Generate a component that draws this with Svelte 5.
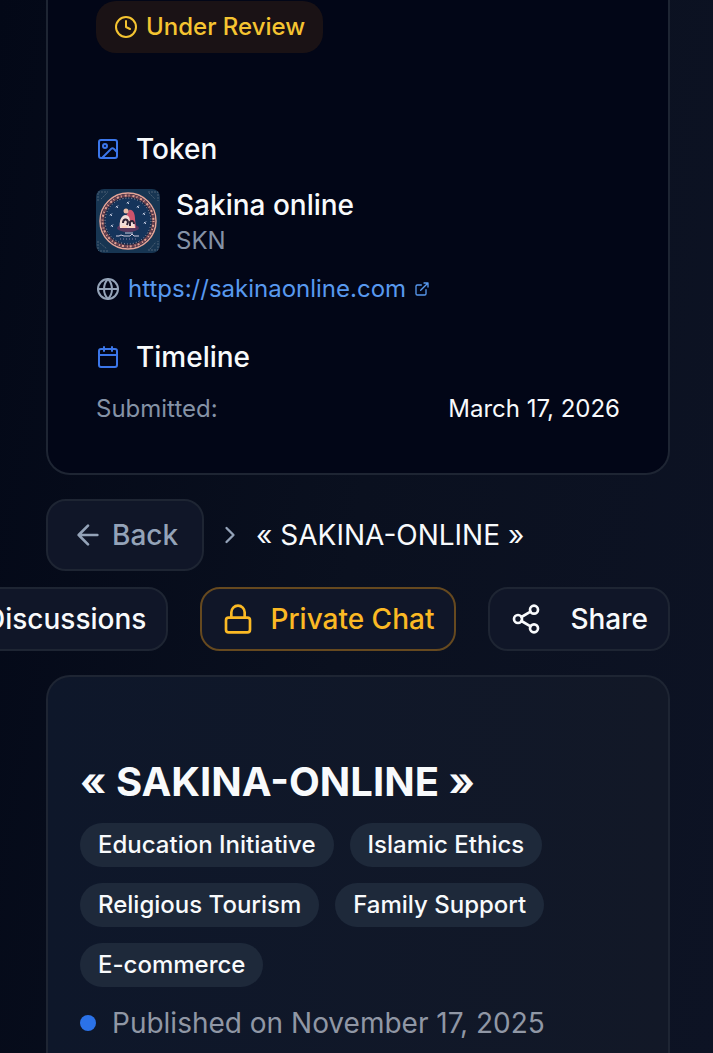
<script lang="ts">
  const categories = [
    'Education Initiative',
    'Islamic Ethics',
    'Religious Tourism',
    'Family Support',
    'E-commerce'
  ];

  const project = {
    name: '« SAKINA-ONLINE »',
    published: 'November 17, 2025',
    submitted: 'March 17, 2026',
    token: { name: 'Sakina online', symbol: 'SKN', url: 'https://sakinaonline.com' }
  };

  // Small symbols arranged over the top half of the token logo
  const marks = [
    [16, 37], [15, 26], [21, 18], [32, 14], [42, 18], [48, 25], [49, 34]
  ];
</script>

<svelte:head>
  <title>{project.name}</title>
</svelte:head>

<div class="page">
  <aside class="summary">
    <span class="status">
      <svg class="icon-md" viewBox="0 0 24 24" aria-hidden="true">
        <circle cx="12" cy="12" r="10" />
        <path d="M12 6v6l4 2" />
      </svg>
      Under Review
    </span>

    <section>
      <h2>
        <svg class="icon-md" viewBox="0 0 24 24" aria-hidden="true">
          <rect x="3" y="3" width="18" height="18" rx="2" />
          <circle cx="9" cy="9" r="2" />
          <path d="m21 15-3.086-3.086a2 2 0 0 0-2.828 0L6 21" />
        </svg>
        Token
      </h2>

      <div class="token">
        <svg class="logo" viewBox="0 0 64 64" role="img" aria-label="Sakina online logo">
          <rect width="64" height="64" fill="#173552" />
          <g fill="none" stroke="#4c6074" stroke-width="1" stroke-dasharray="2 1">
            <path d="M2 12V3h10M5 10l6-6M52 3h10v9M53 4l6 6M2 52v10h10M4 54l7 6M52 61h10V52M54 60l6-7" />
          </g>
          <circle cx="32" cy="32" r="28" fill="#142440" stroke="#e5a396" stroke-width="1.5" />
          <circle cx="32" cy="32" r="25.5" fill="none" stroke="#68404f" stroke-width="3" />
          <circle cx="32" cy="32" r="25.5" fill="none" stroke="#dfa294" stroke-width="2" stroke-dasharray="1 3 2 2" />
          <circle cx="32" cy="32" r="23" fill="#15345b" stroke="#b3adb7" stroke-width="1" stroke-dasharray="1 2" />
          {#each marks as [x, y]}
            <path d="M{x - 1} {y - 1}l2 2m0-2.500l-2 2" stroke="#c3cbe0" stroke-width="1" />
          {/each}
          <ellipse cx="32" cy="39" rx="11" ry="4" fill="#773b61" opacity=".7" />
          <path d="M24 39c-1-7 1-12 6-12l3-6c4-1 6 4 6 9l1 9z" fill="#cc536b" />
          <path d="M24 39c-1-7 1-12 5-13 4 0 5 3 5 7 3-2 5 1 5 6z" fill="#f2ddd8" />
          <circle cx="30" cy="22" r="2.5" fill="#e9bca6" />
          <path d="M27 34c0-4 4-5 5-1l-1 3m3 1v-4c2-2 4-1 4 2" fill="none" stroke="#302336" stroke-width="2" />
          <path d="M26 38h5m3 0h4" stroke="#ffd3bc" stroke-width="2" />
          <path d="M20 47h3l2-1 3 1h6l2-2 2 2h5M29 44h8" fill="none" stroke="#d2c9dc" stroke-width="1" />
          <path d="M24 50h16" stroke="#907eaa" stroke-width="1" stroke-dasharray="1 2" />
        </svg>
        <div>
          <div class="token-name">{project.token.name}</div>
          <div class="muted">{project.token.symbol}</div>
        </div>
      </div>

      <div class="website">
        <svg class="icon-md" viewBox="0 0 24 24" aria-hidden="true">
          <circle cx="12" cy="12" r="10" />
          <path d="M12 2a14.500 14.500 0 0 0 0 20 14.500 14.500 0 0 0 0-20M2 12h20" />
        </svg>
        <a href={project.token.url}>
          {project.token.url}
          <svg class="icon-sm" viewBox="0 0 24 24" aria-hidden="true">
            <path d="M15 3h6v6M10 14 21 3M18 13v6a2 2 0 0 1-2 2H5a2 2 0 0 1-2-2V8a2 2 0 0 1 2-2h6" />
          </svg>
        </a>
      </div>
    </section>

    <section>
      <h2>
        <svg class="icon-md" viewBox="0 0 24 24" aria-hidden="true">
          <path d="M8 2v4M16 2v4M3 10h18" />
          <rect x="3" y="4" width="18" height="18" rx="2" />
        </svg>
        Timeline
      </h2>
      <div class="row">
        <span class="muted">Submitted:</span>
        <time>{project.submitted}</time>
      </div>
    </section>
  </aside>

  <nav class="breadcrumb" aria-label="Breadcrumb">
    <button class="back">
      <svg class="icon-lg" viewBox="0 0 24 24" aria-hidden="true">
        <path d="m12 19-7-7 7-7M19 12H5" />
      </svg>
      Back
    </button>
    <svg class="chevron" viewBox="0 0 24 24" aria-hidden="true">
      <path d="m9 18 6-6-6-6" />
    </svg>
    <span>{project.name}</span>
  </nav>

  <div class="actions">
    <button>Discussions</button>
    <button class="private">
      <svg class="icon-lg" viewBox="0 0 24 24" aria-hidden="true">
        <rect x="3" y="11" width="18" height="11" rx="2" />
        <path d="M7 11V7a5 5 0 0 1 10 0v4" />
      </svg>
      Private Chat
    </button>
    <button class="share">
      <svg class="icon-lg" viewBox="0 0 24 24" aria-hidden="true">
        <circle cx="18" cy="5" r="3" />
        <circle cx="6" cy="12" r="3" />
        <circle cx="18" cy="19" r="3" />
        <path d="m8.590 13.510 6.830 3.980M15.410 6.510l-6.820 3.980" />
      </svg>
      Share
    </button>
  </div>

  <main class="project">
    <h1>{project.name}</h1>
    <ul class="categories">
      {#each categories as category}
        <li>{category}</li>
      {/each}
    </ul>
    <p class="published">
      <span class="dot"></span>
      Published on {project.published}
    </p>
  </main>
</div>

<style>
  :global(body) {
    background: #050a18;
  }

  .page {
    box-sizing: border-box;
    display: flex;
    flex-direction: column;
    min-height: 100vh;
    padding: 0 43px 0 46px;
    overflow: hidden;
    background: linear-gradient(100deg, #030817 0%, #0a101f 50%, #0d1324 100%);
    color: #f8fafc;
    font-family: Inter, sans-serif;
    font-size: 28px;
    line-height: 40px;
  }

  h1,
  h2,
  p,
  ul {
    margin: 0;
    padding: 0;
  }

  svg {
    flex-shrink: 0;
  }

  .icon-sm,
  .icon-md,
  .icon-lg,
  .chevron {
    fill: none;
    stroke: currentColor;
    stroke-width: 2;
    stroke-linecap: round;
    stroke-linejoin: round;
  }

  .icon-sm {
    width: 16px;
    height: 16px;
  }

  .icon-md {
    width: 24px;
    height: 24px;
  }

  .icon-lg {
    width: 32px;
    height: 32px;
  }

  .summary {
    display: flex;
    flex-direction: column;
    gap: 32px;
    padding: 1px 48px 48px;
    border: 2px solid #1e2533;
    border-top: 0;
    border-radius: 0 0 24px 24px;
    background: #020617;
  }

  .status {
    display: flex;
    align-items: center;
    align-self: flex-start;
    gap: 8px;
    margin-bottom: 44px;
    padding: 10px 18px;
    border-radius: 20px;
    background: #1a1215;
    color: #f5c431;
    font-size: 24px;
    font-weight: 500;
    line-height: 32px;
  }

  section {
    display: flex;
    flex-direction: column;
    gap: 16px;
  }

  h2 {
    display: flex;
    align-items: center;
    gap: 16px;
    font-size: 28px;
    font-weight: 500;
  }

  h2 svg {
    color: #3b76ea;
  }

  .token {
    display: flex;
    align-items: center;
    gap: 16px;
  }

  .logo {
    width: 64px;
    height: 64px;
    border-radius: 8px;
  }

  .token-name {
    font-weight: 500;
  }

  .muted {
    color: #8592a6;
    font-size: 24px;
    line-height: 32px;
  }

  .website,
  .website a,
  .row {
    display: flex;
    align-items: center;
    gap: 8px;
    font-size: 24px;
    line-height: 32px;
  }

  .website {
    color: #94a3b8;
  }

  .website a {
    color: #5899ef;
    text-decoration: none;
  }

  .row {
    justify-content: space-between;
  }

  .breadcrumb {
    display: flex;
    align-items: center;
    gap: 12px;
    margin-top: 24px;
  }

  button {
    display: flex;
    flex-shrink: 0;
    align-items: center;
    gap: 16px;
    padding: 10px 20px;
    border: 2px solid #1e2533;
    border-radius: 20px;
    background: #101628;
    color: #f8fafc;
    font: inherit;
    font-weight: 500;
    cursor: pointer;
  }

  .back {
    gap: 8px;
    padding: 14px 24px;
    color: #94a3b8;
  }

  .chevron {
    width: 28px;
    height: 28px;
    color: #94a3b8;
  }

  .actions {
    display: flex;
    justify-content: flex-end;
    gap: 32px;
    margin-top: 16px;
  }

  .private {
    border-color: #66491f;
    color: #fbb924;
  }

  .share {
    gap: 28px;
  }

  .project {
    display: flex;
    flex: 1;
    flex-direction: column;
    gap: 16px;
    margin-top: 24px;
    padding: 80px 32px 10px;
    border: 2px solid #1e2533;
    border-bottom: 0;
    border-radius: 24px 24px 0 0;
    background: linear-gradient(90deg, #0e172a, #121827);
  }

  h1 {
    font-size: 40px;
    font-weight: 700;
    line-height: 50px;
  }

  .categories {
    display: flex;
    flex-wrap: wrap;
    gap: 16px;
    list-style: none;
  }

  .categories li {
    padding: 6px 18px;
    border-radius: 22px;
    background: #1e293a;
    font-size: 24px;
    font-weight: 500;
    line-height: 32px;
  }

  .published {
    display: flex;
    align-items: center;
    gap: 16px;
    color: #9097a5;
  }

  .dot {
    width: 16px;
    height: 16px;
    border-radius: 50%;
    background: #2b72e8;
  }
</style>
